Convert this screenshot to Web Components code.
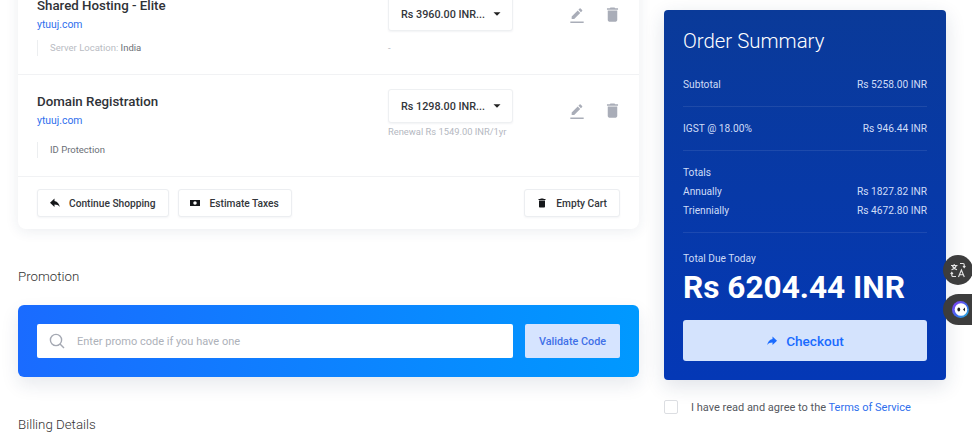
<!DOCTYPE html>
<html>
<head>
<meta charset="utf-8">
<style>
  html, body { margin: 0; height: 440px; overflow: hidden; background: #fff; }
  body { font-family: Roboto, "Liberation Sans", sans-serif; }
  .muted { color: #b9bcc3; }
</style>
</head>
<body>
<checkout-page>
  <cart-card slot="main">
    <cart-item price="Rs 3960.00 INR..." note="-" first>
      <span slot="name">Shared Hosting - Elite</span>
      <span slot="domain">ytuuj.com</span>
      <span slot="addon"><span class="muted">Server Location:</span> India</span>
    </cart-item>
    <cart-item price="Rs 1298.00 INR..." note="Renewal Rs 1549.00 INR/1yr">
      <span slot="name">Domain Registration</span>
      <span slot="domain">ytuuj.com</span>
      <span slot="addon">ID Protection</span>
    </cart-item>
    <action-button slot="left" icon="reply">Continue Shopping</action-button>
    <action-button slot="left" icon="money">Estimate Taxes</action-button>
    <action-button slot="right" icon="delete">Empty Cart</action-button>
  </cart-card>
  <promo-bar slot="main"></promo-bar>
  <section-title slot="main">Billing Details</section-title>
  <order-summary slot="side"></order-summary>
  <terms-check slot="side"></terms-check>
</checkout-page>
<float-widgets></float-widgets>

<script>
const ICONS = {
  reply: '<path d="M11 8V3L2 11.500 11 20v-5c4.600 0 8 1.300 10.500 5-.8-5.500-4-11-10.500-12z"/>',
  forward: '<path d="M13 8V3l9 8.500L13 20v-5c-4.600 0-8 1.300-10.500 5 .8-5.500 4-11 10.500-12z"/>',
  money: '<path fill-rule="evenodd" d="M0 6h20v12H0zM10 8.500a3.500 3.500 0 1 0 0 7 3.500 3.500 0 0 0 0-7z"/>',
  delete: '<path d="M6 19c0 1.100.9 2 2 2h8c1.100 0 2-.9 2-2V7H6v12zM19 4h-3.500l-1-1h-5l-1 1H5v2h14V4z"/>',
  edit: '<path d="M22 24H2v-2.400h20V24zM13.060 5.190l3.750 3.750L7.750 18H4v-3.750l9.060-9.060zm4.820 2.680-3.750-3.750 1.830-1.830c.39-.39 1.020-.39 1.410 0l2.340 2.340c.39.39.39 1.020 0 1.410l-1.830 1.830z"/>',
  caret: '<path d="M6 9l6 6 6-6z"/>'
};

function icon(name, size) {
  return `<svg width="${size}" height="${size}" viewBox="0 0 24 24" fill="currentColor">${ICONS[name]}</svg>`;
}

class CheckoutPage extends HTMLElement {
  constructor() {
    super();
    this.attachShadow({ mode: 'open' });
    this.shadowRoot.innerHTML = /* html */ `
      <style>
        :host {
          display: grid;
          grid-template-columns: 621px 282px;
          column-gap: 25px;
          padding-left: 18px;
          margin-top: -26px;
          color: #333;
        }
        .main { display: flex; flex-direction: column; }
        .side { display: flex; flex-direction: column; padding-top: 36px; }
      </style>
      <div class="main"><slot name="main"></slot></div>
      <div class="side"><slot name="side"></slot></div>
    `;
  }
}

class SectionTitle extends HTMLElement {
  constructor() {
    super();
    this.attachShadow({ mode: 'open' });
    this.shadowRoot.innerHTML = /* html */ `
      <style>
        :host { display: block; font-size: 13.3px; font-weight: 300; line-height: 17px; color: #333; }
      </style>
      <slot></slot>
    `;
  }
}

class CartCard extends HTMLElement {
  constructor() {
    super();
    this.attachShadow({ mode: 'open' });
    this.shadowRoot.innerHTML = /* html */ `
      <style>
        :host {
          display: block;
          background: #fff;
          border-radius: 8px;
          box-shadow: 0 2px 14px rgba(30,50,90,0.09);
        }
        .foot {
          display: flex;
          justify-content: space-between;
          padding: 12px 19px;
        }
        .group { display: flex; gap: 9px; }
      </style>
      <slot></slot>
      <div class="foot">
        <div class="group"><slot name="left"></slot></div>
        <div class="group"><slot name="right"></slot></div>
      </div>
    `;
  }
}

class CartItem extends HTMLElement {
  constructor() {
    super();
    this.attachShadow({ mode: 'open' });
    const first = this.hasAttribute('first');
    this.shadowRoot.innerHTML = /* html */ `
      <style>
        :host {
          display: block;
          border-bottom: 1px solid #f1f2f4;
          padding: ${first ? 23 : 14}px 19px 0;
          height: ${first ? 77 : 87}px;
        }
        .row { display: flex; align-items: flex-start; }
        .info { flex: none; width: 351px; padding-top: ${first ? 0 : 4}px; }
        .name { font-size: 13.3px; font-weight: 500; line-height: 17px; color: #2f3237; }
        .domain { font-size: 10.4px; line-height: 14px; margin-top: 4px; color: #2f6fed; }
        .addon {
          font-size: 9.5px;
          line-height: 16px;
          color: #6b6f76;
          border-left: 1px solid #eceef0;
          padding-left: 12px;
          margin-top: ${first ? 8 : 14}px;
        }
        ::slotted([slot="addon"]) { display: block; }
        .price { flex: none; width: 125px; }
        .select {
          display: flex;
          align-items: center;
          justify-content: space-between;
          box-sizing: border-box;
          height: 34px;
          padding: 0 8px 0 12px;
          background: #fff;
          border: 1px solid #eef0f2;
          border-radius: 3px;
          box-shadow: 0 1px 2px rgba(30,50,90,0.06);
          font-size: 10.8px;
          font-weight: 500;
          color: #33363b;
          white-space: nowrap;
        }
        .select svg { flex: none; color: #222; }
        .note {
          font-size: 9.35px;
          line-height: 12px;
          margin-top: ${first ? 11 : 3}px;
          color: #b4b8bf;
          white-space: nowrap;
        }
        .actions {
          flex: none;
          display: flex;
          align-items: center;
          gap: 18px;
          margin-left: 56px;
          padding-top: ${first ? 8 : 12}px;
          color: #a9adb8;
        }
      </style>
      <div class="row">
        <div class="info">
          <div class="name"><slot name="name"></slot></div>
          <div class="domain"><slot name="domain"></slot></div>
          <div class="addon"><slot name="addon"></slot></div>
        </div>
        <div class="price">
          <div class="select"><span>${this.getAttribute('price')}</span>${icon('caret', 14)}</div>
          <div class="note">${this.getAttribute('note')}</div>
        </div>
        <div class="actions">${icon('edit', 16)}${icon('delete', 19)}</div>
      </div>
    `;
  }
}

class ActionButton extends HTMLElement {
  constructor() {
    super();
    this.attachShadow({ mode: 'open' });
    this.shadowRoot.innerHTML = /* html */ `
      <style>
        :host {
          display: inline-flex;
          align-items: center;
          gap: 8px;
          box-sizing: border-box;
          height: 28px;
          padding: 0 12px 0 11px;
          background: #fff;
          border: 1px solid #eceef1;
          border-radius: 3px;
          box-shadow: 0 1px 2px rgba(30,50,90,0.05);
          font-size: 10.2px;
          font-weight: 500;
          color: #33363b;
          white-space: nowrap;
        }
        svg { flex: none; color: #15171a; }
      </style>
      ${icon(this.getAttribute('icon'), 12)}<slot></slot>
    `;
  }
}

class PromoBar extends HTMLElement {
  constructor() {
    super();
    this.attachShadow({ mode: 'open' });
    this.shadowRoot.innerHTML = /* html */ `
      <style>
        :host { display: block; margin: 39px 0 39px; }
        h3 { margin: 0 0 20px; font-size: 13.3px; font-weight: 300; line-height: 17px; color: #333; }
        .bar {
          display: flex;
          gap: 12px;
          padding: 19px;
          border-radius: 6px;
          background: linear-gradient(90deg, #1a6bff, #0099ff);
          box-shadow: 0 8px 18px rgba(30,50,90,0.1);
        }
        .field {
          flex: 1;
          display: flex;
          align-items: center;
          gap: 12px;
          height: 34px;
          padding-left: 12px;
          background: #fff;
          border-radius: 2px;
          font-size: 11px;
          color: #adb1b9;
        }
        .field svg { color: #a5a9b3; }
        .validate {
          display: flex;
          align-items: center;
          justify-content: center;
          width: 95px;
          background: #d6e4ff;
          border-radius: 2px;
          font-size: 10.8px;
          font-weight: 500;
          color: #3f70e8;
        }
      </style>
      <h3>Promotion</h3>
      <div class="bar">
        <div class="field">
          <svg width="16" height="16" viewBox="0 0 16 16" fill="none" stroke="currentColor" stroke-width="1.4"><circle cx="7" cy="7" r="5.6"/><path d="M11 11l4 4"/></svg>
          <span>Enter promo code if you have one</span>
        </div>
        <div class="validate">Validate Code</div>
      </div>
    `;
  }
}

class OrderSummary extends HTMLElement {
  constructor() {
    super();
    this.attachShadow({ mode: 'open' });
    this.shadowRoot.innerHTML = /* html */ `
      <style>
        :host {
          display: block;
          box-sizing: border-box;
          height: 370px;
          padding: 19px;
          border-radius: 4px;
          background: linear-gradient(180deg, #0a3a99, #0438b6);
          box-shadow: 0 6px 20px rgba(30,50,90,0.14);
          color: #cfdcf7;
          font-size: 10.2px;
        }
        h2 { margin: 0; font-size: 20.4px; font-weight: 300; line-height: 24px; color: #fff; }
        .row { display: flex; justify-content: space-between; line-height: 19px; }
        .block { padding: 12px 0; border-bottom: 1px solid rgba(255,255,255,0.09); }
        .first { margin-top: 10px; }
        .label { margin-top: 19px; line-height: 14px; }
        .total { font-size: 31.6px; font-weight: 700; line-height: 38px; color: #fff; margin-top: 3px; white-space: nowrap; }
        .checkout {
          display: flex;
          align-items: center;
          justify-content: center;
          gap: 8px;
          height: 41px;
          margin-top: 13px;
          background: #d4e3fd;
          border-radius: 3px;
          font-size: 13.6px;
          font-weight: 500;
          color: #1a6bff;
        }
      </style>
      <h2>Order Summary</h2>
      <div class="block first"><div class="row"><span>Subtotal</span><span>Rs 5258.00 INR</span></div></div>
      <div class="block"><div class="row"><span>IGST @ 18.00%</span><span>Rs 946.44 INR</span></div></div>
      <div class="block">
        <div class="row"><span>Totals</span></div>
        <div class="row"><span>Annually</span><span>Rs 1827.82 INR</span></div>
        <div class="row"><span>Triennially</span><span>Rs 4672.80 INR</span></div>
      </div>
      <div class="label">Total Due Today</div>
      <div class="total">Rs 6204.44 INR</div>
      <div class="checkout">${icon('forward', 12)}<span>Checkout</span></div>
    `;
  }
}

class TermsCheck extends HTMLElement {
  constructor() {
    super();
    this.attachShadow({ mode: 'open' });
    this.shadowRoot.innerHTML = /* html */ `
      <style>
        :host {
          display: flex;
          align-items: center;
          gap: 13px;
          margin-top: 20px;
          font-size: 11px;
          color: #55585e;
        }
        .box {
          width: 12px;
          height: 12px;
          border: 1px solid #dcdee2;
          border-radius: 2px;
          background: #fff;
        }
        a { color: #2f6fed; text-decoration: none; }
      </style>
      <span class="box"></span>
      <span>I have read and agree to the <a>Terms of Service</a></span>
    `;
  }
}

class FloatWidgets extends HTMLElement {
  constructor() {
    super();
    this.attachShadow({ mode: 'open' });
    this.shadowRoot.innerHTML = /* html */ `
      <style>
        :host {
          position: fixed;
          top: 255px;
          right: 0;
          width: 29px;
          height: 71px;
          overflow: hidden;
        }
        .tr {
          position: absolute;
          left: 0;
          top: 0;
          width: 30px;
          height: 30px;
          border-radius: 50%;
          background: #3d3d3d;
          display: flex;
          align-items: center;
          justify-content: center;
        }
        .pill {
          position: absolute;
          left: 0;
          top: 39px;
          width: 60px;
          height: 31px;
          border-radius: 16px;
          background: #3d3d3d;
        }
        .pill svg { position: absolute; left: 9px; top: 7px; }
      </style>
      <div class="tr">
        <svg width="16" height="16" viewBox="0 0 16 16" fill="none" stroke="#e6e6e6" stroke-width="1.100">
          <path d="M1 3.500h6.500M4.200 2v1.500M6.300 3.500C5.700 5.600 3.900 7 1.500 7.800M2.300 3.500C2.900 5.600 4.700 7 7 7.800"/>
          <path d="M8.500 15l2.900-7 2.900 7M9.500 12.800h3.800"/>
          <path d="M10 1.500h3c.8 0 1.200.5 1.200 1.200v2.300M13 4l1.200 1.500L15.400 4"/>
          <path d="M6 14.500H3c-.8 0-1.200-.5-1.200-1.200V11M3 12l-1.200-1.500L.6 12"/>
        </svg>
      </div>
      <div class="pill">
        <svg width="17" height="17" viewBox="0 0 17 17">
          <defs><linearGradient id="g" x1="0" y1="0" x2="1" y2="1"><stop offset="0" stop-color="#8a3df0"/><stop offset="0.6" stop-color="#3a6cf0"/><stop offset="1" stop-color="#25c7d9"/></linearGradient></defs>
          <circle cx="8.500" cy="8.500" r="8.500" fill="url(#g)"/>
          <circle cx="9" cy="8.500" r="6.300" fill="#fff"/>
          <ellipse cx="6.800" cy="8.500" rx="1.400" ry="1.900" fill="#222"/>
          <path d="M13 6.600l-2 1.900 2 1.900z" fill="#222"/>
        </svg>
      </div>
    `;
  }
}

customElements.define('checkout-page', CheckoutPage);
customElements.define('section-title', SectionTitle);
customElements.define('cart-card', CartCard);
customElements.define('cart-item', CartItem);
customElements.define('action-button', ActionButton);
customElements.define('promo-bar', PromoBar);
customElements.define('order-summary', OrderSummary);
customElements.define('terms-check', TermsCheck);
customElements.define('float-widgets', FloatWidgets);
</script>
</body>
</html>
